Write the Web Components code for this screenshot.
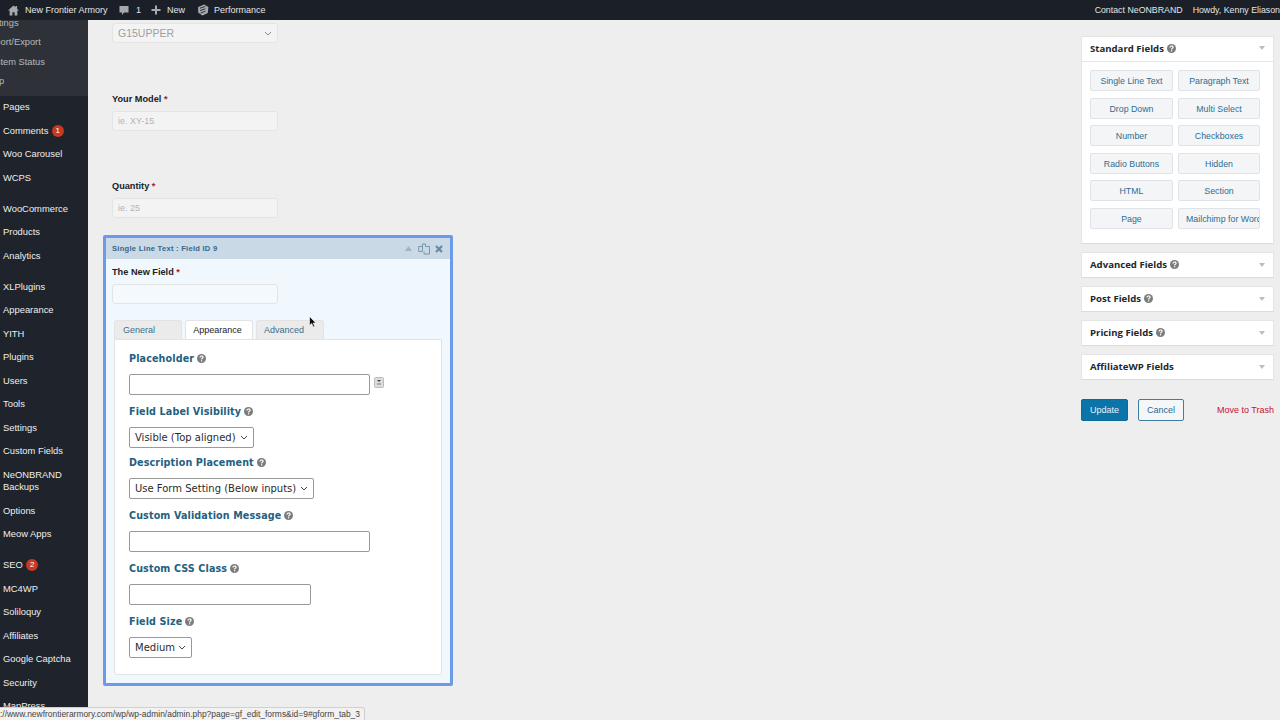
<!DOCTYPE html>
<html lang="en">
<head>
<meta charset="utf-8">
<title>Edit Form</title>
<style>
  html, body { margin: 0; height: 720px; overflow: hidden; background: #eeeeee; font-family: "Liberation Sans", Arial, sans-serif; }
</style>
</head>
<body>
<wp-admin></wp-admin>

<script>
const HELP = `<svg class="help" width="9" height="9" viewBox="0 0 18 18"><circle cx="9" cy="9" r="9" fill="#7c7c7c"/><path d="M6 7c0-4 6.200-4 6.200-.4 0 2.200-3 2-3 4.200" fill="none" stroke="#fff" stroke-width="2.400"/><rect x="8" y="12.400" width="2.400" height="2.400" fill="#fff"/></svg>`;

class WpTopbar extends HTMLElement {
  constructor() {
    super();
    this.attachShadow({ mode: 'open' });
    this.shadowRoot.innerHTML = `
      <style>
        :host {
          display: flex;
          justify-content: space-between;
          align-items: center;
          height: 20px;
          background: #1b1f27;
          color: #e4e5e6;
          font: 9px "Liberation Sans", Arial, sans-serif;
        }
        .left, .right { display: flex; align-items: center; }
        .left { padding-left: 8px; }
        .right { gap: 10px; font-size: 8.800px; white-space: nowrap; }
        .i { display: flex; align-items: center; }
        svg { display: block; fill: #a7aaad; }
      </style>
      <div class="left">
        <span class="i" style="width:17px"><svg width="11" height="11" viewBox="0 0 20 20"><path d="M10 1 0 10h3v9h5v-6h4v6h5v-9h3l-3.500-3.200V2h-3v2.100z"/></svg></span>
        <span class="i" style="width:94px">New Frontier Armory</span>
        <span class="i" style="width:17px"><svg width="10" height="11" viewBox="0 0 20 20"><path d="M1 1h18v13h-9l-4 5v-5H1z"/></svg></span>
        <span class="i" style="width:15px">1</span>
        <span class="i" style="width:16px"><svg width="10" height="10" viewBox="0 0 20 20"><path d="M8 1h4v7h7v4h-7v7H8v-7H1V8h7z"/></svg></span>
        <span class="i" style="width:30px">New</span>
        <span class="i" style="width:17px"><svg width="12" height="12" viewBox="0 0 20 20"><path d="M2 5 12 1l7 4-1 10-9 4-7-5z"/><path d="M5 7l9-3M5 11l9-3M6 15l8-3" stroke="#1b1f27" stroke-width="1.500" fill="none"/></svg></span>
        <span>Performance</span>
      </div>
      <div class="right"><span>Contact NeONBRAND</span><span>Howdy, Kenny Eliason</span></div>
    `;
  }
}

class WpMenu extends HTMLElement {
  constructor() {
    super();
    this.attachShadow({ mode: 'open' });
    const group = (items) => `<div class="group">${items.map((it) => {
      const [label, badge] = it.split('|');
      return `<div class="item">${label}${badge ? `<b>${badge}</b>` : ''}</div>`;
    }).join('')}</div>`;
    this.shadowRoot.innerHTML = `
      <style>
        :host {
          display: block;
          width: 88px;
          height: 700px;
          overflow: hidden;
          flex: none;
          background: #1f232b;
          color: #eeeeee;
          font: 9.400px/12.500px "Liberation Sans", Arial, sans-serif;
        }
        .sub {
          height: 75.500px;
          background: #2e3238;
          color: #b4b9be;
          font-size: 9.300px;
        }
        .sub div { height: 19.300px; line-height: 6px; margin-left: -15px; white-space: nowrap; }
        .group { margin-bottom: 7.500px; }
        .item { padding: 5.500px 0 5.500px 3px; display: flex; align-items: center; }
        .item b {
          display: inline-block;
          width: 12px;
          height: 12px;
          line-height: 12px;
          margin-left: 3.500px;
          border-radius: 50%;
          background: #c8391f;
          color: #fff;
          font-size: 8px;
          font-weight: 400;
          text-align: center;
        }
      </style>
      <div class="sub"><div>Settings</div><div>Import/Export</div><div>System Status</div><div>Help</div></div>
      ${group(['Pages', 'Comments|1', 'Woo Carousel', 'WCPS'])}
      ${group(['WooCommerce', 'Products', 'Analytics'])}
      ${group(['XLPlugins', 'Appearance', 'YITH', 'Plugins', 'Users', 'Tools', 'Settings', 'Custom Fields', 'NeONBRAND<br>Backups', 'Options', 'Meow Apps'])}
      ${group(['SEO|2', 'MC4WP', 'Soliloquy', 'Affiliates', 'Google Captcha', 'Security', 'MapPress'])}
    `;
  }
}

class PreviewField extends HTMLElement {
  constructor() {
    super();
    this.attachShadow({ mode: 'open' });
    const label = this.getAttribute('label');
    const ph = this.getAttribute('placeholder') || '';
    this.shadowRoot.innerHTML = `
      <style>
        :host { display: block; width: 166px; color: #1d2127; font: 9.200px "Liberation Sans", Arial, sans-serif; }
        .label { font-weight: 700; height: 12px; line-height: 12px; margin-bottom: 6px; white-space: nowrap; }
        .label i { color: #a5232c; font-style: normal; }
        .box {
          box-sizing: border-box;
          height: 20px;
          line-height: 18px;
          padding: 0 5px;
          border: 1px solid #e4e4e4;
          border-radius: 3px;
          background: var(--box-bg, #f3f3f3);
          color: #b3b3b3;
          font-size: 9px;
        }
      </style>
      <div class="label">${label} <i>*</i></div>
      <div class="box">${ph}</div>
    `;
  }
}

class SettingRow extends HTMLElement {
  constructor() {
    super();
    this.attachShadow({ mode: 'open' });
    const label = this.getAttribute('label');
    const width = this.getAttribute('width');
    const value = this.getAttribute('value');
    const control = value
      ? `<div class="ctl sel" style="width:${width}px"><span>${value}</span><svg width="8" height="5" viewBox="0 0 8 5"><path d="M1 1l3 3 3-3" fill="none" stroke="#444" stroke-width="1"/></svg></div>`
      : `<div class="ctl" style="width:${width}px"></div>`;
    this.shadowRoot.innerHTML = `
      <style>
        :host { display: block; margin-bottom: 9.500px; font: 9.600px "DejaVu Sans", Verdana, sans-serif; }
        .label {
          display: flex;
          align-items: center;
          gap: 3px;
          height: 14px;
          margin-bottom: 8.500px;
          color: #23617f;
          font-weight: 700;
          letter-spacing: 0.120px;
          white-space: nowrap;
        }
        .line { display: flex; align-items: center; gap: 4px; }
        .ctl {
          box-sizing: border-box;
          height: 21px;
          background: #fff;
          border: 1px solid #999999;
          border-radius: 2px;
        }
        .sel {
          display: flex;
          justify-content: space-between;
          align-items: center;
          padding: 0 5px;
          color: #2b2b2b;
          font-size: 10px;
          white-space: nowrap;
        }
        .help { display: block; }
      </style>
      <div class="label">${label} ${HELP}</div>
      <div class="line">${control}<slot></slot></div>
    `;
  }
}

class FieldEditor extends HTMLElement {
  constructor() {
    super();
    this.attachShadow({ mode: 'open' });
    this.shadowRoot.innerHTML = `
      <style>
        :host {
          display: block;
          box-sizing: border-box;
          width: 350px;
          height: 451px;
          margin-left: -9px;
          border: 3px solid #6b9ae8;
          border-radius: 2px;
          background: #f1f8fd;
        }
        header {
          display: flex;
          align-items: center;
          justify-content: space-between;
          height: 21px;
          padding: 0 7px 0 6px;
          background: #c9d9e6;
          color: #38668a;
          font: 700 7.600px "Liberation Sans", Arial, sans-serif;
          letter-spacing: 0.250px;
        }
        .acts { display: flex; align-items: center; }
        svg { display: block; }
        .preview { padding: 7px 0 0 6px; --box-bg: #f4f9fd; }
        .tabs { display: flex; gap: 3px; margin: 16px 0 0 8px; height: 19px; }
        .tab {
          box-sizing: border-box;
          width: 68px;
          border: 1px solid #e3e3e3;
          border-bottom: 0;
          border-radius: 3px 3px 0 0;
          background: #ebebeb;
          color: #3e6f8a;
          font: 9px/19px "Liberation Sans", Arial, sans-serif;
          text-align: center;
        }
        .tab.first { padding-right: 18px; }
        .tab.second { padding-right: 3px; }
        .tab.third { padding-right: 12px; }
        .tab.on { background: #fff; color: #222; }
        .panel {
          box-sizing: border-box;
          width: 328px;
          height: 336px;
          margin-left: 8px;
          padding: 11px 0 0 14px;
          background: #fff;
          border: 1px solid #e3e3e3;
          border-radius: 0 0 3px 3px;
        }
        .tag { margin-top: -3px; }
      </style>
      <header>
        <span>Single Line Text : Field ID 9</span>
        <span class="acts">
          <svg width="7" height="5" viewBox="0 0 7 5"><path d="M3.500 0 7 5H0z" fill="#9fb4c4"/></svg>
          <svg style="margin:0 5px 0 6px" width="12" height="12" viewBox="0 0 12 12"><path d="M4.500 3.500V1h3v2.500h4V11h-5.500V8.500M4.500 3.500H.7v5h3.500l.3-1.500z" fill="none" stroke="#6f8ea6" stroke-width=".9"/></svg>
          <svg width="8" height="8" viewBox="0 0 8 8"><path d="M1 1l6 6M7 1 1 7" stroke="#6a8aa3" stroke-width="2.200"/></svg>
        </span>
      </header>
      <div class="preview"><preview-field label="The New Field"></preview-field></div>
      <div class="tabs">
        <div class="tab first">General</div>
        <div class="tab second on">Appearance</div>
        <div class="tab third">Advanced</div>
      </div>
      <div class="panel">
        <setting-row label="Placeholder" width="241">
          <svg class="tag" width="10" height="11" viewBox="0 0 10 11"><rect x=".5" y=".5" width="9" height="10" rx="1" fill="#dcdcdc" stroke="#bbb"/><path d="M3 3h4L5 5z" fill="#444"/><path d="M3 7h4" stroke="#777"/></svg>
        </setting-row>
        <setting-row label="Field Label Visibility" width="125" value="Visible (Top aligned)" style="margin-bottom:7.500px"></setting-row>
        <setting-row label="Description Placement" width="185" value="Use Form Setting (Below inputs)" style="margin-bottom:10px"></setting-row>
        <setting-row label="Custom Validation Message" width="241"></setting-row>
        <setting-row label="Custom CSS Class" width="182"></setting-row>
        <setting-row label="Field Size" width="63" value="Medium"></setting-row>
      </div>
    `;
  }
}

class ToolPanel extends HTMLElement {
  constructor() {
    super();
    this.attachShadow({ mode: 'open' });
    const help = this.hasAttribute('nohelp') ? '' : HELP;
    this.shadowRoot.innerHTML = `
      <style>
        :host {
          display: block;
          box-sizing: border-box;
          width: 193px;
          background: #fff;
          border: 1px solid #e5e5e5;
          border-bottom: 1px solid #dcdcdc;
        }
        .head {
          display: flex;
          align-items: center;
          gap: 3px;
          box-sizing: border-box;
          height: 24px;
          padding: 0 8px;
          color: #23282d;
          font: 700 9.600px "Open Sans", sans-serif;
          white-space: nowrap;
        }
        .arrow { margin-left: auto; width: 0; height: 0; border: 3.500px solid transparent; border-top: 4px solid #bdbdbd; border-bottom: 0; }
        .help { display: block; }
        .body { display: none; }
        :host([open]) .head { height: 25px; padding-bottom: 2px; border-bottom: 1px solid #e5e5e5; }
        :host([open]) .body { display: block; padding: 8px 8px 14px; }
      </style>
      <div class="head">${this.getAttribute('label')} ${help}<span class="arrow"></span></div>
      <div class="body"><slot></slot></div>
    `;
  }
}

class ToolGrid extends HTMLElement {
  constructor() {
    super();
    this.attachShadow({ mode: 'open' });
    this.shadowRoot.innerHTML = `
      <style>
        :host { display: grid; grid-template-columns: 83px 82px; column-gap: 5px; row-gap: 6.600px; }
      </style>
      <slot></slot>
    `;
  }
}

class ToolBtn extends HTMLElement {
  constructor() {
    super();
    this.attachShadow({ mode: 'open' });
    this.shadowRoot.innerHTML = `
      <style>
        :host {
          display: block;
          box-sizing: border-box;
          height: 21px;
          padding: 0 7px;
          overflow: hidden;
          border: 1px solid #dfe3e8;
          border-radius: 2px;
          background: #f3f5f6;
          color: #2c6e93;
          font: 8.800px/20px "Liberation Sans", Arial, sans-serif;
          text-align: center;
          white-space: nowrap;
        }
      </style>
      <slot></slot>
    `;
  }
}

class WpAdmin extends HTMLElement {
  constructor() {
    super();
    this.attachShadow({ mode: 'open' });
    const tools = ['Single Line Text', 'Paragraph Text', 'Drop Down', 'Multi Select', 'Number', 'Checkboxes', 'Radio Buttons', 'Hidden', 'HTML', 'Section', 'Page', 'Mailchimp for WordPress'];
    this.shadowRoot.innerHTML = `
      <style>
        :host { display: block; width: 1280px; height: 720px; overflow: hidden; position: relative; }
        .app { display: flex; }
        .main { flex: 1; display: flex; justify-content: space-between; height: 700px; overflow: hidden; }
        .form { padding: 3px 0 0 24px; }
        .select {
          box-sizing: border-box;
          display: flex;
          justify-content: space-between;
          align-items: center;
          width: 166px;
          height: 20px;
          padding: 0 5px;
          border: 1px solid #e4e4e4;
          border-radius: 3px;
          background: #f3f3f3;
          color: #a0a0a0;
          font: 10.500px "Liberation Sans", Arial, sans-serif;
        }
        .side { width: 193px; padding: 16px 6px 0 0; display: flex; flex-direction: column; }
        tool-panel { margin-bottom: 8px; }
        .actions { display: flex; align-items: center; margin-top: 11px; font: 9px "Liberation Sans", Arial, sans-serif; }
        .btn { box-sizing: border-box; height: 22px; line-height: 20px; text-align: center; border-radius: 2px; }
        .update { width: 47px; background: #0b74a8; border: 1px solid #0b6a99; color: #e9f3f8; }
        .cancel { width: 46px; margin-left: 10px; background: #f4f6f7; border: 1px solid #3f7ea3; color: #2a6a8e; }
        .trash { margin-left: auto; color: #c8102e; white-space: nowrap; }
        .status {
          position: absolute;
          left: 0;
          bottom: 0;
          box-sizing: border-box;
          display: flex;
          justify-content: flex-end;
          width: 365px;
          height: 13px;
          padding-right: 4px;
          background: #f2f2f2;
          border: 1px solid #d0d0d0;
          border-left: 0;
          border-bottom: 0;
          border-radius: 0 3px 0 0;
          color: #444;
          font: 8.450px/12px "Liberation Sans", Arial, sans-serif;
          white-space: nowrap;
          overflow: hidden;
        }
        .status span { flex: none; }
        .cursor { position: absolute; left: 309px; top: 316px; }
      </style>
      <wp-topbar></wp-topbar>
      <div class="app">
        <wp-menu></wp-menu>
        <div class="main">
          <div class="form">
            <div class="select"><span>G15UPPER</span><svg width="8" height="5" viewBox="0 0 8 5"><path d="M1 1l3 3 3-3" fill="none" stroke="#888"/></svg></div>
            <preview-field label="Your Model" placeholder="ie. XY-15" style="margin-top:50px"></preview-field>
            <preview-field label="Quantity" placeholder="ie. 25" style="margin-top:49px"></preview-field>
            <field-editor style="margin-top:17px"></field-editor>
          </div>
          <div class="side">
            <tool-panel label="Standard Fields" open>
              <tool-grid>${tools.map((t) => `<tool-btn>${t}</tool-btn>`).join('')}</tool-grid>
            </tool-panel>
            <tool-panel label="Advanced Fields"></tool-panel>
            <tool-panel label="Post Fields"></tool-panel>
            <tool-panel label="Pricing Fields"></tool-panel>
            <tool-panel label="AffiliateWP Fields" nohelp></tool-panel>
            <div class="actions">
              <div class="btn update">Update</div>
              <div class="btn cancel">Cancel</div>
              <div class="trash">Move to Trash</div>
            </div>
          </div>
        </div>
      </div>
      <div class="status"><span>https://www.newfrontierarmory.com/wp/wp-admin/admin.php?page=gf_edit_forms&amp;id=9#gform_tab_3</span></div>
      <svg class="cursor" width="8" height="12" viewBox="0 0 8 12"><path d="M.5.500v9l2.200-2 1.500 3.500 1.500-.7-1.500-3.300H7z" fill="#111" stroke="#fff" stroke-width=".6"/></svg>
    `;
  }
}

customElements.define('wp-topbar', WpTopbar);
customElements.define('wp-menu', WpMenu);
customElements.define('preview-field', PreviewField);
customElements.define('setting-row', SettingRow);
customElements.define('field-editor', FieldEditor);
customElements.define('tool-panel', ToolPanel);
customElements.define('tool-grid', ToolGrid);
customElements.define('tool-btn', ToolBtn);
customElements.define('wp-admin', WpAdmin);
</script>
</body>
</html>
